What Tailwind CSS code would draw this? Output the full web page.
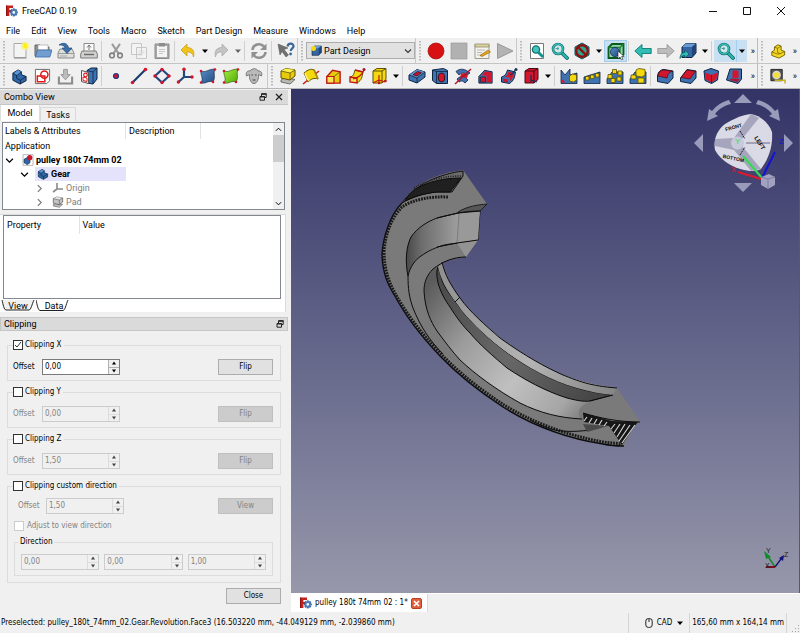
<!DOCTYPE html>
<html lang="en">
<head>
<meta charset="utf-8">
<title>FreeCAD 0.19</title>
<script src="https://cdn.jsdelivr.net/npm/@tailwindcss/browser@4"></script>
</head>
<body class="flex min-h-screen flex-col bg-[#f0f0f0] font-['Roboto','Liberation_Sans',sans-serif] text-[9px] leading-3 text-black">

<!-- shared icon shapes -->
<svg class="absolute size-0" aria-hidden="true">
  <defs>
    <linearGradient id="steel" x1="0" y1="0" x2="1" y2="1"><stop offset="0" stop-color="#5c8fc8"/><stop offset="1" stop-color="#1f4a80"/></linearGradient>
    <linearGradient id="grn" x1="0" y1="0" x2="1" y2="1"><stop offset="0" stop-color="#a5ee3e"/><stop offset="1" stop-color="#4ea806"/></linearGradient>
    <symbol id="logo" viewBox="0 0 12 12"><path d="M0 .5h7v2.600H3.400v2h2.400v2H3.400V11H0z" fill="#c8201c"/><path d="M0 .5h1.200V11H0z" fill="#8d1210"/><g transform="translate(7.8 7.4)"><g fill="#3465a4"><rect x="-1" y="-4" width="2" height="8"/><rect x="-4" y="-1" width="8" height="2"/><rect x="-1" y="-4" width="2" height="8" transform="rotate(45)"/><rect x="-1" y="-4" width="2" height="8" transform="rotate(-45)"/></g><circle r="2.900" fill="#4a7cba"/><circle r="1.300" fill="#fff"/></g></symbol>
    <symbol id="new" viewBox="0 0 18 18"><path d="M3 1.500h12v14H3z" fill="#f4f4f2" stroke="#a9aaa6"/><path d="M3 16h12.500" stroke="#888"/><circle cx="14" cy="4" r="4" fill="#fcf36a" opacity=".8"/><circle cx="14" cy="4" r="2" fill="#fff200"/></symbol>
    <symbol id="open" viewBox="0 0 18 18"><path d="M1 3h5l1 2h8v9H1z" fill="#8d8f8a" stroke="#6b6d69"/><path d="M4 3h10v5H4z" fill="#fff" stroke="#999" stroke-width=".6"/><path d="M3.500 8H18l-2.200 7H1.200z" fill="#729fcf" stroke="#3a6ba8" stroke-width=".8"/></symbol>
    <symbol id="save" viewBox="0 0 18 18"><path d="M3 7h12l2 4v5H1v-5z" fill="#dededc" stroke="#898b87"/><path d="M1.500 11.500h15" stroke="#898b87" stroke-width=".8"/><path d="M3 14h7" stroke="#aaa"/><path d="M2 3c4-3 9-2 9.500 3H15l-5 5.500L5 6h3C8 4 5 2.500 2 3z" fill="#3b6faa" stroke="#234b7d" stroke-width=".7"/></symbol>
    <symbol id="print" viewBox="0 0 18 18"><path d="M4 1.500h10V10H4z" fill="#fafafa" stroke="#8b8b8b"/><path d="M9 3v5M7 5.500 9 3l2 2.500" stroke="#777" fill="none"/><path d="M2 9h14l1.300 3v4H.7v-4z" fill="#d0d0ce" stroke="#7c7c7c"/><path d="M4 12.500h10" stroke="#6c6c6c" stroke-width="1.400"/></symbol>
    <symbol id="cut" viewBox="0 0 18 18"><path d="M4.500 1 12 12M13.500 1 6 12" stroke="#9a9a9a" stroke-width="2.200"/><circle cx="4.500" cy="14" r="2.600" fill="none" stroke="#828282" stroke-width="1.800"/><circle cx="13.500" cy="14" r="2.600" fill="none" stroke="#828282" stroke-width="1.800"/></symbol>
    <symbol id="copy" viewBox="0 0 18 18"><path d="M1.500 1.500h10v11h-10zM6.500 5.500h10v11h-10z" fill="#f3f3f3" stroke="#c6c6c6"/><path d="M8.500 9h6M8.500 11h6M8.500 13h4" stroke="#d5d5d5" stroke-width=".8"/></symbol>
    <symbol id="paste" viewBox="0 0 18 18"><path d="M2 2h14v14.500H2z" fill="#a9a9a9" stroke="#8c8c8c"/><path d="M4 4h10v11H4z" fill="#f4f4f4"/><path d="M6 1h6v3.500H6z" fill="#8d8d8d"/><path d="M6 7.500h6M6 9.500h6M6 11.500h4" stroke="#bbb" stroke-width=".8"/></symbol>
    <symbol id="undo" viewBox="0 0 18 18"><path d="M8 2v3.500c5 0 8 3 6.500 9.500-.8-4-3-5-6.500-5V14L2 8z" fill="#f0c41c" stroke="#c09a10" stroke-width=".7"/></symbol>
    <symbol id="redo" viewBox="0 0 18 18"><path d="M10 2v3.500c-5 0-8 3-6.500 9.500.8-4 3-5 6.500-5V14l6-6z" fill="#c4c4c4" stroke="#a5a5a5" stroke-width=".7"/></symbol>
    <symbol id="refresh" viewBox="0 0 18 18"><path d="M2.500 8c.5-6 8-7.500 11.500-3.500M15.500 10c-.5 6-8 7.500-11.500 3.500" fill="none" stroke="#8f918e" stroke-width="2.600"/><path d="M16.500 1.500V8H10zM1.500 16.500V10H8z" fill="#8f918e"/></symbol>
    <symbol id="whats" viewBox="0 0 18 18"><path d="m1 2 10 4-4 1.500 4.500 5.500-2.500 2-4-5.500L3 13z" fill="#6f716e" stroke="#555" stroke-width=".5"/><path d="M10.500 4.500c.5-4 6.500-3.500 6 0-.3 2-2.800 2-2.800 4.500" fill="none" stroke="#3c6696" stroke-width="2.200"/><circle cx="13.600" cy="12" r="1.400" fill="#3c6696"/></symbol>
    <symbol id="rec" viewBox="0 0 18 18"><circle cx="9" cy="9" r="8" fill="#d81212" stroke="#9c0c0c" stroke-width=".7"/></symbol>
    <symbol id="stop" viewBox="0 0 18 18"><path d="M1 1h16v16H1z" fill="#b1b1b1" stroke="#9a9a9a" stroke-width=".7"/></symbol>
    <symbol id="note" viewBox="0 0 18 18"><path d="M2 2.500h14v14H2z" fill="#f3f2ec" stroke="#9b9b93"/><path d="M2 2h14v3H2z" fill="#d9d3a0" stroke="#87835c" stroke-width=".7"/><path d="M4 8h8M4 10.500h5M4 13h6" stroke="#a8a8a8" stroke-width=".8"/><path d="M7 13.500 15 8l2.500 2-8.500 4.500z" fill="#e4a722" stroke="#8a5c0c" stroke-width=".6"/></symbol>
    <symbol id="play" viewBox="0 0 18 18"><path d="m1.500 1.500 15.500 7.500-15.500 7.500z" fill="#b3b3b3" stroke="#8c8c8c" stroke-width=".8"/></symbol>
    <symbol id="fitall" viewBox="0 0 18 18"><path d="M2.500 1.500h13v15h-13z" fill="#fff" stroke="#777"/><circle cx="8" cy="7.500" r="3.600" fill="#43c4bf" stroke="#0f6f6c" stroke-width="1.300"/><path d="m10.500 10.500 4.500 4.500" stroke="#12908c" stroke-width="2.800"/></symbol>
    <symbol id="mag" viewBox="0 0 18 18"><path d="m10 10 6 6" stroke="#0f6f6c" stroke-width="3.800" stroke-linecap="round"/><path d="m10 10 6 6" stroke="#2db5b0" stroke-width="2" stroke-linecap="round"/><circle cx="7" cy="7" r="5" fill="#cfe9ea" stroke="#0f6f6c" stroke-width="2.600"/><circle cx="7" cy="7" r="5" fill="none" stroke="#37c0ba" stroke-width="1.300"/><path d="M4.500 6.500h3l-1-1.500M7.500 6.500l-1 1.500" stroke="#1f8b88" fill="none" stroke-width=".8"/></symbol>
    <symbol id="nodraw" viewBox="0 0 18 18"><path d="M2 5 9 1l7 4v8l-7 4-7-4z" fill="#29a3a3" stroke="#0a5a5a"/><circle cx="9" cy="9" r="5.800" fill="#4a6" fill-opacity=".3" stroke="#8c1111" stroke-width="2.400"/><path d="m5 5 8 8" stroke="#8c1111" stroke-width="2.400"/></symbol>
    <symbol id="selbox" viewBox="0 0 18 18"><path d="M1.500 5.500 5 2h11.500v10.500L13 16H1.500z" fill="#9bd0b2" stroke="#0a5c1c" stroke-width="1.800"/><path d="M1.500 5.500H13V16M13 5.500 16.500 2" fill="none" stroke="#17862f" stroke-width="1.400"/><circle cx="8" cy="10" r="4.600" fill="url(#steel)" stroke="#12305a" stroke-width=".8"/><path d="M11 9v8l2-2 1.500 3 1.500-.8-1.400-2.600h2.600z" fill="#fff" stroke="#222" stroke-width=".6"/></symbol>
    <symbol id="left" viewBox="0 0 18 18"><path d="M.8 9 8 2.500v4h9.200v5H8v4z" fill="#2fbdb4" stroke="#0f7a73" stroke-width=".9"/></symbol>
    <symbol id="right" viewBox="0 0 18 18"><path d="M17.200 9 10 2.500v4H.8v5H10v4z" fill="#bcbcbc" stroke="#9a9a9a" stroke-width=".9"/></symbol>
    <symbol id="cube" viewBox="0 0 18 18"><path d="M3 5 7 1.500h10v9.500l-4 4.500H3z" fill="#3565a2" stroke="#0e2443"/><path d="M3 5 7 1.500h10L13 5z" fill="#6b9bd0"/><path d="M13 5v10.500l4-4.500V1.500z" fill="#1e4478"/></symbol>
    <symbol id="link" viewBox="0 0 18 18"><use href="#cube"/><path d="M1 16.500c0-4 2-6 5-6V8l4 4-4 4v-2.500c-2 0-4 .8-5 3z" fill="#2fbdb4" stroke="#0a5a5a" stroke-width=".7"/></symbol>
    <symbol id="part" viewBox="0 0 18 18"><path d="m2 10 3-2V4.500L9 2l3.500 1.500V8l4 1.500v4L10 17l-8-3z" fill="#f2d61f" stroke="#6e5d05"/><path d="m5 4.500 3.500 1.500v4.500l3 1.500 5-2.500M8.500 6l4-2.500M2 10l6.500 2.500 3-.5" fill="none" stroke="#6e5d05" stroke-width=".8"/></symbol>
    <symbol id="body" viewBox="0 0 18 18"><path d="M2 5.500 7.500 2 11 4v3l5 2v4.500L9.500 17 2 13z" fill="#2f68a8" stroke="#0b2340"/><path d="M2 5.500 6 8l5-4M6 8v3l4 2 6-4M10 13v4" fill="none" stroke="#0b2340" stroke-width=".9"/><path d="m7.500 2 3 2L6.200 7.300 3 5.500z" fill="#5a94d2"/></symbol>
    <symbol id="sketch" viewBox="0 0 18 18"><path d="M1.500 1.500h15v12l-3 3h-12z" fill="#fff" stroke="#666"/><path d="M3.500 8.500h8v6h-8z" fill="none" stroke="#e01b1b" stroke-width="1.600"/><circle cx="11" cy="7" r="3.800" fill="none" stroke="#e01b1b" stroke-width="1.600"/></symbol>
    <symbol id="import" viewBox="0 0 18 18"><path d="M2 9v7.500h14V9" fill="none" stroke="#8b8b8b" stroke-width="2.200"/><path d="M7 1.500h4V7h3l-5 5.500L4 7h3z" fill="#bdbdbd" stroke="#858585" stroke-width=".8"/></symbol>
    <symbol id="skmap" viewBox="0 0 18 18"><path d="M7 3.500 11 1h6v11l-4 5-6-1z" fill="#3e73b3" stroke="#0e2443"/><path d="M13 5v12M13 5l4-4M7 3.500 13 5" stroke="#0e2443" fill="none" stroke-width=".8"/><path d="m1.500 3.500 7 2v11l-7-2z" fill="#fff" stroke="#555"/><circle cx="5.500" cy="8" r="1.800" fill="none" stroke="#e01b1b" stroke-width="1.200"/><path d="m3 10 4 1v3.500l-4-1z" fill="none" stroke="#e01b1b"/></symbol>
    <symbol id="dot" viewBox="0 0 18 18"><circle cx="9" cy="9" r="2.500" fill="#c31640" stroke="#1f3c7a" stroke-width="1.200"/></symbol>
    <symbol id="line" viewBox="0 0 18 18"><path d="M2.500 15.500 15.500 2.500" stroke="#173c6c" stroke-width="2.200"/><circle cx="2.500" cy="15.500" r="1.800" fill="#d4142c"/><circle cx="15.500" cy="2.500" r="1.800" fill="#d4142c"/></symbol>
    <symbol id="plane" viewBox="0 0 18 18"><path d="M9 2.500 16 9l-7 6.500L2 9z" fill="none" stroke="#22497d" stroke-width="2.200"/><g fill="#d4142c"><circle cx="9" cy="2.500" r="1.700"/><circle cx="16" cy="9" r="1.700"/><circle cx="9" cy="15.500" r="1.700"/><circle cx="2" cy="9" r="1.700"/></g></symbol>
    <symbol id="axes" viewBox="0 0 18 18"><path d="M8 2.500V10h8M8 10l-5.500 5" fill="none" stroke="#22497d" stroke-width="2.200"/><g fill="#d4142c"><circle cx="8" cy="2.300" r="1.700"/><circle cx="16" cy="10" r="1.700"/><circle cx="2.400" cy="15" r="1.700"/></g></symbol>
    <symbol id="blob" viewBox="0 0 18 18"><path d="M2 4c5 2 7-2 14-2-2 5 1 8-2 13-4-2-7 2-12 1 3-5-1-8 0-12z"/></symbol>
    <symbol id="clone" viewBox="0 0 18 18"><path d="M5 4c2-3 7-3 8 0 3-.5 4.500 2 3.500 5l-3-1.500C14 12 12 16.500 9 16.500S4 12 4.500 7.500L1.500 9C.5 6 2 3.500 5 4z" fill="#b9b9b9" stroke="#7b7b7b"/><path d="M6.500 8h1.500M10 8h1.500M7.500 13h3" stroke="#444" stroke-width="1.200"/></symbol>
    <symbol id="pad" viewBox="0 0 18 18"><path d="M2 13 6 10.500l10 2-5 4.500-9-2z" fill="#b9b9b4" stroke="#555" stroke-width=".8"/><path d="m2 4 5-2.500 9 1.500v6l-5 4-9-2z" fill="#e8cb0c" stroke="#5e5004"/><path d="m2 4 5-2.500 9 1.500-5 3z" fill="#fff04a"/><path d="m2 4 9 2v7M11 6l5-3" fill="none" stroke="#5e5004" stroke-width=".8"/></symbol>
    <symbol id="rev" viewBox="0 0 18 18"><path d="M1 17 17 4" stroke="#c11" stroke-width="1.400"/><path d="M2 6c4-3.500 7-4.500 10-3l4 9c-4-1.500-7 0-10 3z" fill="#f5d90f" stroke="#5e5004"/><path d="M12 2.500 16 12" stroke="#a98e08" stroke-width="1.800"/><path d="M3 6c1 4 2 6 4 8" stroke="#fff27a" stroke-width="1.500" fill="none"/></symbol>
    <symbol id="loft" viewBox="0 0 18 18"><path d="M2 9 8 2.500l8 1.500v12H2z" fill="#e8cb0c" stroke="#c11616" stroke-width="1.500"/><path d="M2 9h7.500v7H2z" fill="#f8e454" stroke="#c11616" stroke-width="1.300"/><path d="M9.500 9 16 4" stroke="#5e5004" stroke-width=".8"/></symbol>
    <symbol id="sweep" viewBox="0 0 18 18"><path d="M2 10c4-1 4-4 5-7l8 2c-1 5-1 8-6 11z" fill="#f5d90f" stroke="#5e5004"/><path d="m7 3 8 2" stroke="#c11616" stroke-width="1.400"/><path d="m2 10 7 1v5l-7-1z" fill="#f8e454" stroke="#c11616" stroke-width="1.400"/><path d="M5 12c5-1 9-4 11-9" fill="none" stroke="#c11616" stroke-width="1.200"/><circle cx="16" cy="2.500" r="1.500" fill="#a01030"/></symbol>
    <symbol id="prim" viewBox="0 0 18 18"><path d="m3 4 4-2.500h9v11L12 16H3z" fill="#f5d90f" stroke="#5e5004"/><path d="M3 4h9v12M12 4l4-2.500" fill="none" stroke="#5e5004"/><path d="M9 8v7M9 13l-6 3M9 13l6 2" stroke="#c11616" stroke-width="1.200"/><circle cx="9" cy="16" r="1.300" fill="#c11616"/><circle cx="15.500" cy="14" r="1.300" fill="#c11616"/></symbol>
    <symbol id="pocket" viewBox="0 0 18 18"><path d="m1 8 8-5.500 8 2.500v5l-8 6-8-3z" fill="#3f72b0" stroke="#0e2443"/><path d="m1 8 8-5.500 8 2.500-8 6z" fill="#5f93cf"/><path d="m1 8 8 3 8-6M9 11v5" fill="none" stroke="#0e2443" stroke-width=".8"/><path d="m5 7.700 4.500-3.200 4 1.200L9 9z" fill="#c2142c" stroke="#3a0a12" stroke-width=".7"/></symbol>
    <symbol id="hole" viewBox="0 0 18 18"><path d="m1.500 3 11-1.500 4 2v13h-11l-4-3z" fill="#3f72b0" stroke="#0e2443"/><path d="M5.500 4.500h11M5.500 4.500v12M1.500 3l4 1.500" fill="none" stroke="#0e2443" stroke-width=".8"/><ellipse cx="10.500" cy="10.500" rx="3.200" ry="4.300" fill="#d3162c" stroke="#3a0a12"/></symbol>
    <symbol id="groove" viewBox="0 0 18 18"><path d="M2 4.500C6 1 11 1.500 16 6l-3 2c-3-3-6-2-8 0z" fill="#3f72b0" stroke="#0e2443" stroke-width=".8"/><path d="M3 12c4-4 8-3 11 1l-3 3c-3-3-4-2-6-1z" fill="#3f72b0" stroke="#0e2443" stroke-width=".8"/><path d="M7 7c3-2 6 0 7 2l-2 3C10 9 8 9 6 10z" fill="#d3162c"/><path d="M1 17 17 2" stroke="#b01228" stroke-width="1.400"/></symbol>
    <symbol id="sloft" viewBox="0 0 18 18"><path d="M2 9 8 2.500l8 1.500v12H2z" fill="#3f72b0" stroke="#0e2443"/><path d="m8.500 3.500 6.500 1.300V15H10V8H5z" fill="#d3162c"/><path d="M3.500 9.500H9V15H3.500z" fill="#d3162c" stroke="#17315b"/></symbol>
    <symbol id="ssweep" viewBox="0 0 18 18"><path d="M1.500 10c4-1 5-4 6-7l8 2c-1 5-1 8-6 11.500l-8-1.500z" fill="#3f72b0" stroke="#0e2443"/><path d="M8.500 4.500 14 6c-1 4-1.500 6-4 8v-3.500L4.500 10c2.500-1 3.500-3 4-5.500zM3 11.500l5 .7v3L3 14.500z" fill="#d3162c"/><path d="M10 8c3-1 4-3 6-6" fill="none" stroke="#17315b" stroke-width="1.300"/><circle cx="16" cy="2.500" r="1.500" fill="#17315b"/></symbol>
    <symbol id="sprim" viewBox="0 0 18 18"><path d="m3 4 4-2.500h9v11L12 16H3z" fill="#d3162c" stroke="#4a0812"/><path d="M3 4h9v12M12 4l4-2.500" fill="none" stroke="#4a0812"/><path d="M9 8v7M9 13l6 2" stroke="#17315b" stroke-width="1.300"/></symbol>
    <symbol id="base" viewBox="0 0 18 18"><path d="M1 5 8 3l1 5 8-1v9.500H1z" fill="#3f72b0" stroke="#0e2443" stroke-width=".8"/></symbol>
    <symbol id="mirror" viewBox="0 0 18 18"><path d="M1 16.500V3l4 5 5-6v6l7-2v10.500z" fill="#3f72b0" stroke="#0e2443" stroke-width=".8"/><path d="m9.500 9 3-2 4 1v5l-3 2-4-1z" fill="#f5d90f" stroke="#5e5004" stroke-width=".8"/><path d="m1.500 12 4 3.500H1.500z" fill="#d3162c"/></symbol>
    <symbol id="linpat" viewBox="0 0 18 18"><path d="m1 10 16-5v11.500H1z" fill="#3f72b0" stroke="#0e2443" stroke-width=".8"/><path d="M2.500 9.500h3.500V13H2.500zM7.500 8H11v3.500H7.500zM12.500 6.500H16V10h-3.500z" fill="#f5d90f" stroke="#5e5004" stroke-width=".8"/></symbol>
    <symbol id="polpat" viewBox="0 0 18 18"><path d="m1 12 5-7h11v11.500H1z" fill="#3f72b0" stroke="#0e2443" stroke-width=".8"/><path d="M6.500 2.500h4v4h-4zM12 4h4v4h-4zM2 7.500h4v4H2zM5 11.500h4v4H5zM11 10h4v4h-4z" fill="#f5d90f" stroke="#5e5004" stroke-width=".8"/></symbol>
    <symbol id="multi" viewBox="0 0 18 18"><path d="m1 12 5-7h11v11.500H1z" fill="#3f72b0" stroke="#0e2443" stroke-width=".8"/><path d="m7 3 3-1.500 6 1V8l-3 2-6-1zM2 8h5v4H2zM9 11h6v5H9z" fill="#f5d90f" stroke="#5e5004" stroke-width=".8"/></symbol>
    <symbol id="fillet" viewBox="0 0 18 18"><path d="M1.500 9C2 4.500 5 2.500 8 2.500l9 1.500v7L12 16.500l-10.500-2z" fill="#3f72b0" stroke="#0e2443"/><path d="M2 9c.5-4 3-6 6-6l8.500 1.300C13.500 5 11.500 7 11 11z" fill="#d3162c" stroke="#4a0812" stroke-width=".7"/></symbol>
    <symbol id="chamfer" viewBox="0 0 18 18"><path d="M1.500 11 8 2.500l9 1.500v7L12 16.500l-10.500-2z" fill="#3f72b0" stroke="#0e2443"/><path d="M2 10.500 8 3l8.500 1.300L11 12z" fill="#d3162c" stroke="#4a0812" stroke-width=".7"/></symbol>
    <symbol id="draft" viewBox="0 0 18 18"><path d="m2 4 7-2.500 7.500 2.500-1 9-6 3.500-6.500-3z" fill="#3f72b0" stroke="#0e2443"/><path d="m3 5.500 6.500 2.500L15.500 5.500l-1 6.500-5 3.500L4 12.500z" fill="#d3162c"/><path d="M9.500 8v8" stroke="#17315b"/></symbol>
    <symbol id="thick" viewBox="0 0 18 18"><path d="M5 2h11.500v10L13 16.500 1.500 13z" fill="#3f72b0" stroke="#0e2443"/><path d="M7.500 3.500h6V11h-6z" fill="#d3162c"/><path d="m6.500 11.500 8 .5-2 3-8-2z" fill="#b81226"/></symbol>
    <symbol id="tape" viewBox="0 0 18 18"><path d="M2 1.500h12v12H2z" fill="#55565a" stroke="#222"/><circle cx="8" cy="7.500" r="3.800" fill="#f2dd3a" stroke="#d8d8d8" stroke-width="1.400"/><path d="M6 13h11v3.500" stroke="#c5b020" stroke-width="1.600" fill="none"/></symbol>
    <symbol id="doc" viewBox="0 0 18 18"><path d="M1.500 1h15v16h-15z" fill="#fff" stroke="#999"/><path d="m3 8 5-3 4 3v5l-4 3-5-3z" fill="#2f68a8" stroke="#0b2340" stroke-width=".8"/><circle cx="11.500" cy="5.500" r="4" fill="#c8182a"/></symbol>
    <symbol id="chev" viewBox="0 0 8 8"><path d="m1 2.500 3 3 3-3" fill="none" stroke="currentColor" stroke-width="1.100"/></symbol>
    <symbol id="dd" viewBox="0 0 8 8"><path d="M1 2.500h6L4 6z" fill="currentColor"/></symbol>
    <symbol id="float" viewBox="0 0 8 8"><path d="M2.500.8h4.700v3.700H6M2.500.8V3" fill="none" stroke="#222"/><path d="M1 3.500h4.500v3.700H1z" fill="none" stroke="#222"/><path d="M2.500 1h5M1 3.700h4.500" stroke="#222" stroke-width="1.400"/></symbol>
    <symbol id="spin" viewBox="0 0 8 6"><path d="M4 1.500 6 4.500H2z" fill="currentColor"/></symbol>
    <symbol id="handle" viewBox="0 0 4 20"><path d="M2 0v20" stroke="#a8a8a8" stroke-width="1.500" stroke-dasharray="1.500 1.500"/></symbol>
  </defs>
</svg>

<header class="bg-white">
  <div class="flex h-[21px] items-center pr-[2px] pl-[6px]">
    <svg class="mr-1 size-3"><use href="#logo"/></svg>
    <h1 class="flex-1">FreeCAD 0.19</h1>
    <button aria-label="Minimize" class="flex h-full w-[34px] items-center justify-center"><svg class="size-2" viewBox="0 0 8 8"><path d="M0 4.500h8" stroke="#111"/></svg></button>
    <button aria-label="Maximize" class="flex h-full w-[34px] items-center justify-center"><svg class="size-2" viewBox="0 0 8 8"><path d="M.5.5h7v7h-7z" fill="none" stroke="#111"/></svg></button>
    <button aria-label="Close window" class="flex h-full w-[34px] items-center justify-center"><svg class="size-2" viewBox="0 0 8 8"><path d="m0 0 8 8M8 0 0 8" stroke="#111"/></svg></button>
  </div>
  <nav class="flex h-[17px] gap-[11px] px-[6px] pt-[3px]">
    <button class="leading-3">File</button><button class="leading-3">Edit</button><button class="leading-3">View</button><button class="leading-3">Tools</button><button class="leading-3">Macro</button><button class="leading-3">Sketch</button><button class="leading-3">Part Design</button><button class="leading-3">Measure</button><button class="leading-3">Windows</button><button class="leading-3">Help</button>
  </nav>
</header>

<div class="flex h-[26px] items-center border-b border-[#c4c4c4]">
  <div class="flex h-full min-w-0 flex-1 items-center overflow-hidden border-r border-[#bdbdbd]">
    <div class="flex h-full items-center border-r border-[#c8c8c8]">
      <svg class="h-5 w-2"><use href="#handle"/></svg>
      <button aria-label="New" class="flex w-[23px] justify-center"><svg class="size-[18px]"><use href="#new"/></svg></button>
      <button aria-label="Open" class="flex w-[23px] justify-center"><svg class="size-[18px]"><use href="#open"/></svg></button>
      <button aria-label="Save" class="flex w-[23px] justify-center"><svg class="size-[18px]"><use href="#save"/></svg></button>
      <button aria-label="Print" class="flex w-[23px] justify-center"><svg class="size-[18px]"><use href="#print"/></svg></button>
      <span class="mr-[2px] ml-px h-5 w-px bg-[#cfcfcf]"></span>
      <button aria-label="Cut" class="flex w-[23px] justify-center"><svg class="size-[16px]"><use href="#cut"/></svg></button>
      <button aria-label="Copy" class="flex w-[23px] justify-center"><svg class="size-[18px]"><use href="#copy"/></svg></button>
      <button aria-label="Paste" class="flex w-[23px] justify-center"><svg class="size-[18px]"><use href="#paste"/></svg></button>
      <span class="mr-[2px] ml-px h-5 w-px bg-[#cfcfcf]"></span>
      <button aria-label="Undo" class="flex w-[33px] items-center pl-[2px]"><svg class="size-[18px]"><use href="#undo"/></svg><svg class="ml-[4px] size-2"><use href="#dd"/></svg></button>
      <button aria-label="Redo" class="flex w-[33px] items-center pl-[2px] text-[#666]"><svg class="size-[18px]"><use href="#redo"/></svg><svg class="ml-[4px] size-2"><use href="#dd"/></svg></button>
      <span class="mr-[2px] ml-px h-5 w-px bg-[#cfcfcf]"></span>
      <button aria-label="Refresh" class="flex w-[23px] justify-center"><svg class="size-[18px]"><use href="#refresh"/></svg></button>
      <span class="mr-[2px] ml-px h-5 w-px bg-[#cfcfcf]"></span>
      <button aria-label="What's this?" class="flex w-[23px] justify-center"><svg class="size-[18px]"><use href="#whats"/></svg></button>
    </div>
    <div class="flex h-full items-center border-r border-[#c8c8c8]">
      <svg class="h-5 w-2"><use href="#handle"/></svg>
      <label class="relative flex items-center">
        <svg class="pointer-events-none absolute left-1 size-3"><use href="#cube"/><circle cx="3.500" cy="3.500" r="2.500" fill="#f5d90f"/></svg>
        <select aria-label="Workbench" class="h-[17px] w-[109px] appearance-none border border-[#adadad] bg-[#e1e1e1] pl-[17px] text-[9px] leading-3"><option>Part Design</option></select>
        <svg class="pointer-events-none absolute right-[3px] size-2 text-[#333]"><use href="#chev"/></svg>
      </label>
    </div>
    <div class="flex h-full items-center border-r border-[#c8c8c8]">
      <svg class="h-5 w-2"><use href="#handle"/></svg>
      <button aria-label="Record macro" class="flex w-[23px] justify-center"><svg class="size-[18px]"><use href="#rec"/></svg></button>
      <button aria-label="Stop macro" class="flex w-[23px] justify-center"><svg class="size-[18px]"><use href="#stop"/></svg></button>
      <button aria-label="Macros" class="flex w-[23px] justify-center"><svg class="size-[18px]"><use href="#note"/></svg></button>
      <button aria-label="Run macro" class="flex w-[23px] justify-center"><svg class="size-[18px]"><use href="#play"/></svg></button>
    </div>
    <svg class="h-5 w-2 shrink-0"><use href="#handle"/></svg>
    <button aria-label="Fit all" class="flex w-[23px] justify-center"><svg class="size-[18px]"><use href="#fitall"/></svg></button>
    <button aria-label="Fit selection" class="flex w-[23px] justify-center"><svg class="size-[18px]"><use href="#mag"/></svg></button>
    <button aria-label="Draw style" class="flex w-[33px] items-center pl-[2px]"><svg class="size-[18px]"><use href="#nodraw"/></svg><svg class="ml-[4px] size-2"><use href="#dd"/></svg></button>
    <button aria-label="Bounding box" class="flex h-[22px] w-[23px] items-center justify-center border border-[#a5cdec] bg-[#c9e0f3]"><svg class="size-[18px]"><use href="#selbox"/></svg></button>
    <span class="mr-[2px] ml-px h-5 w-px bg-[#cfcfcf]"></span>
    <button aria-label="Back" class="flex w-[23px] justify-center"><svg class="size-[18px]"><use href="#left"/></svg></button>
    <button aria-label="Forward" class="flex w-[23px] justify-center"><svg class="size-[18px]"><use href="#right"/></svg></button>
    <button aria-label="Link navigation" class="flex w-[33px] items-center pl-[2px]"><svg class="size-[18px]"><use href="#link"/></svg><svg class="ml-[4px] size-2"><use href="#dd"/></svg></button>
    <span class="mr-[2px] ml-px h-5 w-px bg-[#cfcfcf]"></span>
    <button aria-label="Sync view" class="flex h-[22px] w-[33px] items-center bg-[#c9e0f3] pl-[3px]"><svg class="size-[18px]"><use href="#mag"/></svg><span class="ml-px flex h-full items-center border-l border-[#a5cdec] pl-px"><svg class="size-2"><use href="#dd"/></svg></span></button>
    <button aria-label="More view tools" class="ml-auto px-[2px]">»</button>
  </div>
  <div class="flex w-[42px] items-center">
    <svg class="h-5 w-2"><use href="#handle"/></svg>
    <button aria-label="Create part" class="flex w-[23px] justify-center"><svg class="size-[16px]"><use href="#part"/></svg></button>
    <button aria-label="More structure tools" class="ml-auto px-[3px]">»</button>
  </div>
</div>

<div class="flex h-[25px] items-center border-b border-[#b5b5b5]">
  <div class="flex h-full min-w-0 flex-1 items-center overflow-hidden border-r border-[#bdbdbd]">
    <div class="flex h-full items-center border-r border-[#c8c8c8] pr-[2px]">
      <svg class="h-5 w-2"><use href="#handle"/></svg>
      <button aria-label="Body" class="flex w-[23px] justify-center"><svg class="size-[17px]"><use href="#body"/></svg></button>
      <button aria-label="Sketch" class="flex w-[23px] justify-center"><svg class="size-[17px]"><use href="#sketch"/></svg></button>
      <button aria-label="Edit sketch" class="flex w-[23px] justify-center"><svg class="size-[17px]"><use href="#import"/></svg></button>
      <button aria-label="Map sketch" class="flex w-[23px] justify-center"><svg class="size-[18px]"><use href="#skmap"/></svg></button>
      <span class="mr-[2px] ml-px h-5 w-px bg-[#cfcfcf]"></span>
      <button aria-label="Point" class="flex w-[23px] justify-center"><svg class="size-[18px]"><use href="#dot"/></svg></button>
      <button aria-label="Line" class="flex w-[23px] justify-center"><svg class="size-[18px]"><use href="#line"/></svg></button>
      <button aria-label="Plane" class="flex w-[23px] justify-center"><svg class="size-[18px]"><use href="#plane"/></svg></button>
      <button aria-label="Coordinate system" class="flex w-[23px] justify-center"><svg class="size-[18px]"><use href="#axes"/></svg></button>
      <button aria-label="Shape binder" class="flex w-[23px] justify-center"><svg class="size-[18px]" viewBox="0 0 18 18" fill="url(#steel)" stroke="#0e2443" stroke-width=".6"><use href="#blob"/><g fill="#d4142c" stroke="none"><circle cx="2" cy="4" r="1.300"/><circle cx="16" cy="2.500" r="1.300"/><circle cx="2" cy="15.500" r="1.300"/><circle cx="14" cy="15" r="1.300"/></g></svg></button>
      <button aria-label="Sub-shape binder" class="flex w-[23px] justify-center"><svg class="size-[18px]" viewBox="0 0 18 18" fill="url(#grn)" stroke="#1d4a05" stroke-width=".6"><use href="#blob"/><g fill="#d4142c" stroke="none"><circle cx="2" cy="4" r="1.300"/><circle cx="16" cy="2.500" r="1.300"/><circle cx="2" cy="15.500" r="1.300"/><circle cx="14" cy="15" r="1.300"/></g></svg></button>
      <button aria-label="Clone" class="flex w-[23px] justify-center"><svg class="size-[18px]"><use href="#clone"/></svg></button>
    </div>
    <svg class="h-5 w-2 shrink-0"><use href="#handle"/></svg>
    <button aria-label="Pad" class="flex w-[23px] justify-center"><svg class="size-[18px]"><use href="#pad"/></svg></button>
    <button aria-label="Revolution" class="flex w-[23px] justify-center"><svg class="size-[18px]"><use href="#rev"/></svg></button>
    <button aria-label="Loft" class="flex w-[23px] justify-center"><svg class="size-[17px]"><use href="#loft"/></svg></button>
    <button aria-label="Pipe" class="flex w-[23px] justify-center"><svg class="size-[18px]"><use href="#sweep"/></svg></button>
    <button aria-label="Additive primitive" class="flex w-[33px] items-center pl-[2px]"><svg class="size-[18px]"><use href="#prim"/></svg><svg class="ml-[4px] size-2"><use href="#dd"/></svg></button>
    <span class="mr-[2px] ml-px h-5 w-px bg-[#cfcfcf]"></span>
    <button aria-label="Pocket" class="flex w-[23px] justify-center"><svg class="size-[18px]"><use href="#pocket"/></svg></button>
    <button aria-label="Hole" class="flex w-[23px] justify-center"><svg class="size-[18px]"><use href="#hole"/></svg></button>
    <button aria-label="Groove" class="flex w-[23px] justify-center"><svg class="size-[18px]"><use href="#groove"/></svg></button>
    <button aria-label="Subtractive loft" class="flex w-[23px] justify-center"><svg class="size-[17px]"><use href="#sloft"/></svg></button>
    <button aria-label="Subtractive pipe" class="flex w-[23px] justify-center"><svg class="size-[18px]"><use href="#ssweep"/></svg></button>
    <button aria-label="Subtractive primitive" class="flex w-[33px] items-center pl-[2px]"><svg class="size-[18px]"><use href="#sprim"/></svg><svg class="ml-[4px] size-2"><use href="#dd"/></svg></button>
    <span class="mr-[2px] ml-px h-5 w-px bg-[#cfcfcf]"></span>
    <button aria-label="Mirrored" class="flex w-[23px] justify-center"><svg class="size-[18px]"><use href="#mirror"/></svg></button>
    <button aria-label="Linear pattern" class="flex w-[23px] justify-center"><svg class="size-[18px]"><use href="#linpat"/></svg></button>
    <button aria-label="Polar pattern" class="flex w-[23px] justify-center"><svg class="size-[18px]"><use href="#polpat"/></svg></button>
    <button aria-label="MultiTransform" class="flex w-[23px] justify-center"><svg class="size-[18px]"><use href="#multi"/></svg></button>
    <span class="mr-[2px] ml-px h-5 w-px bg-[#cfcfcf]"></span>
    <button aria-label="Fillet" class="flex w-[23px] justify-center"><svg class="size-[18px]"><use href="#fillet"/></svg></button>
    <button aria-label="Chamfer" class="flex w-[23px] justify-center"><svg class="size-[18px]"><use href="#chamfer"/></svg></button>
    <button aria-label="Draft" class="flex w-[23px] justify-center"><svg class="size-[18px]"><use href="#draft"/></svg></button>
    <button aria-label="Thickness" class="flex w-[23px] justify-center"><svg class="size-[18px]"><use href="#thick"/></svg></button>
    <button aria-label="More part design tools" class="ml-auto px-[2px]">»</button>
  </div>
  <div class="flex w-[42px] items-center">
    <svg class="h-5 w-2"><use href="#handle"/></svg>
    <button aria-label="Measure distance" class="flex w-[23px] justify-center"><svg class="size-[17px]"><use href="#tape"/></svg></button>
    <button aria-label="More measure tools" class="ml-auto px-[3px]">»</button>
  </div>
</div>

<main class="flex flex-1">
  <aside class="flex w-[288px] shrink-0 flex-col">
    <section aria-label="Combo View" class="bg-[#f0f0f0]">
      <div class="mt-px flex h-[15px] items-center border-b border-[#c6c6c6] bg-[#dadada] px-1">
        <h2 class="flex-1">Combo View</h2>
        <button aria-label="Float panel" class="mr-2"><svg class="size-2"><use href="#float"/></svg></button>
        <button aria-label="Close panel" class="mr-px"><svg class="size-2" viewBox="0 0 8 8"><path d="m1 1 6 6M7 1 1 7" stroke="#222" stroke-width="1.300"/></svg></button>
      </div>
      <div role="tablist" class="flex h-4 items-end">
        <button role="tab" class="h-4 w-10 border-x border-[#dedede] bg-white leading-3">Model</button>
        <button role="tab" class="h-[14px] w-9 border border-b-0 border-[#d9d9d9] leading-3">Tasks</button>
      </div>
      <div class="mt-px mr-[3px] ml-[2px] flex h-[88px] overflow-hidden border border-[#828790] bg-white">
        <div class="min-w-0 flex-1 overflow-hidden">
          <div class="flex h-4 items-center">
            <div class="w-[123px] border-r border-[#e2e2e2] pl-[2px] leading-4">Labels &amp; Attributes</div>
            <div class="w-[75px] border-r border-[#e2e2e2] pl-[3px] leading-4">Description</div>
          </div>
          <ul role="tree" class="leading-[14px]">
            <li role="treeitem" class="pl-[2px]">Application</li>
            <li role="treeitem" class="flex items-center pl-[2px] font-bold"><svg class="mr-2 size-[9px]"><use href="#chev"/></svg><svg class="mr-[2px] size-3"><use href="#doc"/></svg>pulley 180t 74mm 02</li>
            <li role="treeitem" class="flex items-center pl-[17px] font-bold"><svg class="mr-[6px] size-[9px] shrink-0"><use href="#chev"/></svg><span class="flex w-[91px] items-center bg-[#e5e3fb] pl-[2px]"><svg class="mr-[2px] size-3"><use href="#body"/></svg>Gear</span></li>
            <li role="treeitem" class="flex items-center pl-[32px] text-[#7d7d7d]"><svg class="mr-2 size-[9px] -rotate-90"><use href="#chev"/></svg><svg class="mr-[2px] size-3" viewBox="0 0 12 12"><path d="M5 1v6h6M5 7l-4 3" fill="none" stroke="#8a8a8a" stroke-width="1.600"/></svg>Origin</li>
            <li role="treeitem" class="flex items-center pl-[32px] text-[#7d7d7d]"><svg class="mr-2 size-[9px] -rotate-90"><use href="#chev"/></svg><svg class="mr-[2px] size-3 grayscale"><use href="#pad"/></svg>Pad</li>
          </ul>
        </div>
        <div class="flex w-[11px] flex-col items-center bg-[#f0f0f0]">
          <button aria-label="Scroll up" class="flex h-3 items-center"><svg class="size-[7px] rotate-180"><use href="#chev"/></svg></button>
          <div class="h-[27px] w-full bg-[#cdcdcd]"></div>
          <button aria-label="Scroll down" class="mt-auto flex h-3 items-center"><svg class="size-[7px]"><use href="#chev"/></svg></button>
        </div>
      </div>
      <div class="mt-1 mr-[2px] border-t border-r border-[#dcdcdc] bg-white">
        <div class="mr-1 ml-[3px] h-[84px] border border-[#828790] bg-white">
          <table class="w-full text-left"><thead><tr><th class="w-[75px] border-r border-[#e2e2e2] py-[3px] pl-[3px] font-normal">Property</th><th class="py-[3px] pl-[3px] font-normal">Value</th></tr></thead></table>
        </div>
        <div role="tablist" class="mt-px flex h-3">
          <button role="tab" class="relative w-9 leading-3"><svg class="absolute inset-0 h-3 w-9" viewBox="0 0 36 12"><path d="M2 0c1 4 2 10 4 10h23c2 0 3-6 5-10z" fill="#f0f0f0"/><path d="M2 0c1 4 2 10 4 10h23c2 0 3-6 5-10" fill="none" stroke="#222"/></svg><span class="relative">View</span></button>
          <button role="tab" class="relative w-9 leading-3"><svg class="absolute inset-0 h-3 w-9" viewBox="0 0 36 12"><path d="M0 0c1 4 2 10.500 4 10.500h23c2 0 3-6 5-10.500" fill="#fff" stroke="#222"/></svg><span class="relative">Data</span></button>
        </div>
      </div>
    </section>

    <section aria-label="Clipping" class="mt-[5px] font-['DejaVu_Sans_Condensed','DejaVu_Sans',sans-serif] text-[8px] leading-3">
      <div class="flex h-[14px] items-center border border-[#c6c6c6] bg-[#dadada] px-[3px] font-['Roboto','Liberation_Sans',sans-serif] text-[9px]">
        <h2 class="flex-1">Clipping</h2>
        <button aria-label="Float panel"><svg class="size-2"><use href="#float"/></svg></button>
      </div>
      <form class="flex flex-col gap-[5px] pt-[8px] pr-[7px] pl-[7px]">
        <fieldset class="border border-[#dcdcdc] pr-[7px] pb-[5px] pl-[5px]">
          <legend class="pr-[2px]"><label class="flex items-center gap-[2px]"><span class="relative flex"><input type="checkbox" checked class="peer size-[10px] appearance-none border border-[#333] bg-white"><svg class="pointer-events-none absolute inset-px hidden size-2 peer-checked:block" viewBox="0 0 8 8"><path d="m1 4 2 2 4-5" fill="none" stroke="#333"/></svg></span>Clipping X</label></legend>
          <div class="flex items-center pt-2"><label for="ox" class="w-[29px]">Offset</label>
            <div class="flex h-4 w-[78px] border border-[#7a7a7a] bg-white"><input id="ox" value="0,00" class="w-0 flex-1 bg-transparent pl-[2px] outline-none"><span class="flex w-[11px] flex-col border-l border-[#b0b0b0] bg-[#f0f0f0]"><button type="button" aria-label="Increase" class="flex flex-1 items-center border-b border-[#b0b0b0]"><svg class="h-[6px] w-[10px]"><use href="#spin"/></svg></button><button type="button" aria-label="Decrease" class="flex flex-1 items-center"><svg class="h-[6px] w-[10px] rotate-180"><use href="#spin"/></svg></button></span></div>
            <button type="button" class="ml-auto h-4 w-[55px] border border-[#adadad] bg-[#e1e1e1] leading-3">Flip</button></div>
        </fieldset>
        <fieldset class="border border-[#dcdcdc] pr-[7px] pb-[5px] pl-[5px]">
          <legend class="pr-[2px]"><label class="flex items-center gap-[2px]"><input type="checkbox" class="size-[10px] appearance-none border border-[#333] bg-white">Clipping Y</label></legend>
          <div class="flex items-center pt-2 text-[#838383]"><label for="oy" class="w-[29px]">Offset</label>
            <div class="flex h-4 w-[78px] border border-[#cccccc]"><input id="oy" value="0,00" disabled class="w-0 flex-1 bg-transparent pl-[2px]"><span class="flex w-[11px] flex-col border-l border-[#dcdcdc] text-[#444]"><button type="button" disabled aria-label="Increase" class="flex flex-1 items-center border-b border-[#dcdcdc]"><svg class="h-[6px] w-[10px]"><use href="#spin"/></svg></button><button type="button" disabled aria-label="Decrease" class="flex flex-1 items-center"><svg class="h-[6px] w-[10px] rotate-180"><use href="#spin"/></svg></button></span></div>
            <button type="button" disabled class="ml-auto h-4 w-[55px] border border-[#bfbfbf] bg-[#cccccc] leading-3">Flip</button></div>
        </fieldset>
        <fieldset class="border border-[#dcdcdc] pr-[7px] pb-[5px] pl-[5px]">
          <legend class="pr-[2px]"><label class="flex items-center gap-[2px]"><input type="checkbox" class="size-[10px] appearance-none border border-[#333] bg-white">Clipping Z</label></legend>
          <div class="flex items-center pt-2 text-[#838383]"><label for="oz" class="w-[29px]">Offset</label>
            <div class="flex h-4 w-[78px] border border-[#cccccc]"><input id="oz" value="1,50" disabled class="w-0 flex-1 bg-transparent pl-[2px]"><span class="flex w-[11px] flex-col border-l border-[#dcdcdc] text-[#444]"><button type="button" disabled aria-label="Increase" class="flex flex-1 items-center border-b border-[#dcdcdc]"><svg class="h-[6px] w-[10px]"><use href="#spin"/></svg></button><button type="button" disabled aria-label="Decrease" class="flex flex-1 items-center"><svg class="h-[6px] w-[10px] rotate-180"><use href="#spin"/></svg></button></span></div>
            <button type="button" disabled class="ml-auto h-4 w-[55px] border border-[#bfbfbf] bg-[#cccccc] leading-3">Flip</button></div>
        </fieldset>
        <fieldset class="border border-[#dcdcdc] pr-[7px] pb-[6px] pl-[5px]">
          <legend class="pr-[2px]"><label class="flex items-center gap-[2px]"><input type="checkbox" class="size-[10px] appearance-none border border-[#333] bg-white">Clipping custom direction</label></legend>
          <div class="flex items-center pt-[6px] pl-[5px] text-[#838383]"><label for="oc" class="w-[28px]">Offset</label>
            <div class="flex h-4 w-[78px] border border-[#cccccc]"><input id="oc" value="1,50" disabled class="w-0 flex-1 bg-transparent pl-[2px]"><span class="flex w-[11px] flex-col border-l border-[#dcdcdc] text-[#444]"><button type="button" disabled aria-label="Increase" class="flex flex-1 items-center border-b border-[#dcdcdc]"><svg class="h-[6px] w-[10px]"><use href="#spin"/></svg></button><button type="button" disabled aria-label="Decrease" class="flex flex-1 items-center"><svg class="h-[6px] w-[10px] rotate-180"><use href="#spin"/></svg></button></span></div>
            <button type="button" disabled class="ml-auto h-4 w-[55px] border border-[#bfbfbf] bg-[#cccccc] leading-3">View</button></div>
          <label class="mt-[6px] flex items-center gap-[3px] pl-px text-[#838383]"><input type="checkbox" disabled class="size-[10px] appearance-none border border-[#cccccc] bg-white">Adjust to view direction</label>
          <fieldset class="mt-1 ml-px border border-[#dcdcdc] px-[6px] pb-[5px]">
            <legend class="ml-[-2px] px-px">Direction</legend>
            <div class="flex gap-[5px] pt-[6px] text-[#838383]">
              <div class="flex h-4 flex-1 border border-[#cccccc]"><input aria-label="Direction X" value="0,00" disabled class="w-0 flex-1 bg-transparent pl-[2px]"><span class="flex w-[11px] flex-col border-l border-[#dcdcdc] text-[#444]"><button type="button" disabled aria-label="Increase" class="flex flex-1 items-center border-b border-[#dcdcdc]"><svg class="h-[6px] w-[10px]"><use href="#spin"/></svg></button><button type="button" disabled aria-label="Decrease" class="flex flex-1 items-center"><svg class="h-[6px] w-[10px] rotate-180"><use href="#spin"/></svg></button></span></div>
              <div class="flex h-4 flex-1 border border-[#cccccc]"><input aria-label="Direction Y" value="0,00" disabled class="w-0 flex-1 bg-transparent pl-[2px]"><span class="flex w-[11px] flex-col border-l border-[#dcdcdc] text-[#444]"><button type="button" disabled aria-label="Increase" class="flex flex-1 items-center border-b border-[#dcdcdc]"><svg class="h-[6px] w-[10px]"><use href="#spin"/></svg></button><button type="button" disabled aria-label="Decrease" class="flex flex-1 items-center"><svg class="h-[6px] w-[10px] rotate-180"><use href="#spin"/></svg></button></span></div>
              <div class="flex h-4 flex-1 border border-[#cccccc]"><input aria-label="Direction Z" value="1,00" disabled class="w-0 flex-1 bg-transparent pl-[2px]"><span class="flex w-[11px] flex-col border-l border-[#dcdcdc] text-[#444]"><button type="button" disabled aria-label="Increase" class="flex flex-1 items-center border-b border-[#dcdcdc]"><svg class="h-[6px] w-[10px]"><use href="#spin"/></svg></button><button type="button" disabled aria-label="Decrease" class="flex flex-1 items-center"><svg class="h-[6px] w-[10px] rotate-180"><use href="#spin"/></svg></button></span></div>
            </div>
          </fieldset>
        </fieldset>
        <button type="button" class="h-4 w-[55px] self-end border border-[#adadad] bg-[#e1e1e1] leading-3">Close</button>
      </form>
    </section>
  </aside>

  <section aria-label="3D view" class="ml-[3px] flex min-w-0 flex-1 flex-col">
    <div class="relative flex-1 border-r border-[#555a6a] bg-linear-to-b from-[#333366] to-[#9898ab]">
      <svg class="absolute inset-0 size-full" viewBox="291 89 508 504" preserveAspectRatio="xMidYMid slice" role="img" aria-label="Clipped pulley model">
        <defs>
          <linearGradient id="g1" x1="425" y1="290" x2="590" y2="420" gradientUnits="userSpaceOnUse"><stop offset="0" stop-color="#5c5c5c"/><stop offset=".3" stop-color="#9c9c9c"/><stop offset=".6" stop-color="#c0c0c0"/><stop offset=".85" stop-color="#a6a6a6"/><stop offset="1" stop-color="#747474"/></linearGradient>
          <linearGradient id="g2" x1="406" y1="0" x2="460" y2="0" gradientUnits="userSpaceOnUse"><stop offset="0" stop-color="#484848"/><stop offset=".3" stop-color="#6e6e6e"/><stop offset="1" stop-color="#a0a0a0"/></linearGradient>
          <linearGradient id="g3" x1="440" y1="270" x2="610" y2="395" gradientUnits="userSpaceOnUse"><stop offset="0" stop-color="#484848"/><stop offset=".5" stop-color="#686868"/><stop offset="1" stop-color="#424242"/></linearGradient>
          <linearGradient id="g4" x1="440" y1="265" x2="617" y2="390" gradientUnits="userSpaceOnUse"><stop offset="0" stop-color="#8f8f8f"/><stop offset=".6" stop-color="#b4b4b4"/><stop offset="1" stop-color="#858585"/></linearGradient>
        </defs>
        <path d="M463 170C440 173 415 182 402 203C390 215 383 237 382 255C383 275 388 285 395 296C405 315 420 335 440 356C458 375 480 392 503 407C530 424 565 438 603 444C612 446 619 446 624 446L635 424L640 422C633 411 625 400 617 388C590 384 578 381 563 375C545 367 525 356 500 338C485 325 470 312 460 298C450 285 445 272 443 262C450 259 458 257 466 257L478 240L480 211L487 204Z" fill="#7a7a7a"/>
        <path d="M402 203C390 215 383 237 382 255C383 275 388 285 395 296C405 315 420 335 440 356C458 375 480 392 503 407C530 424 565 438 603 444C612 446 619 446 624 446" fill="none" stroke="#0c0c0c" stroke-width="1.400"/>
        <path d="M463 171C440 174 415 184 402 203C412 197 425 193 437 192L452 192L463 176Z" fill="#6c6c6c" stroke="#0c0c0c"/>
        <path d="M461 178C445 178 428 181 414 190C410 193 407 197 405 201C417 195 428 193 437 192L450 192Z" fill="#202020" stroke="#0c0c0c"/>
        <path d="M461 176C446 176 427 179 413 189" fill="none" stroke="#222" stroke-width="1.600" stroke-dasharray="1.200 1.200"/>
        <path d="M448 197C430 196 412 200 402 207C392 217 386 232 384 250C384 270 389 283 396 295C406 313 421 333 440 353C459 373 481 390 504 405C530 421 565 435 603 442L622 444" fill="none" stroke="#1a1a1a" stroke-width="3" stroke-dasharray="1.800 1"/>
        <path d="M480 211C470 211 464 212 458 213C450 215 444 216 437 218C427 222 418 227 411 237C406 247 405 262 408 276C410 267 415 260 421 256C428 251 433 249 438 247C445 244 452 244 458 243C466 241 472 240 478 240Z" fill="url(#g2)" stroke="#0c0c0c"/>
        <path d="M459 213 480 211 478 240 457 243Z" fill="#999"/>
        <path d="M459 214 457 243" stroke="#7c7c7c" fill="none"/>
        <path d="M457 243 478 240 466 257Z" fill="#939393"/>
        <path d="M458 212C468 206 477 205 487 204L480 211C470 211 464 212 458 213Z" fill="#565656" stroke="#0c0c0c" stroke-width=".8"/>
        <path d="M437 218 458 213 480 211M437 247 457 243 478 240" stroke="#0c0c0c" fill="none"/>
        <path d="M466 257C453 257 442 262 433 269C427 275 424 282 424 291C425 310 431 322 437 331C445 342 452 351 460 360C475 374 495 389 520 403C540 413 560 418 582 419L590 401C600 400 607 398 613 395L617 388C590 384 578 381 563 375C545 367 525 356 500 338C485 325 470 312 460 298C450 285 445 272 443 262Z" fill="url(#g1)"/>
        <path d="M438 267C436 272 437 278 438 283C441 293 445 300 450 307C457 318 462 325 470 333C480 345 493 356 507 368C525 380 545 391 567 398C575 400 583 402 590 401L613 395C590 393 562 385 540 373C515 360 497 346 480 330C470 320 463 313 458 305C452 297 447 291 443 283Z" fill="url(#g3)" stroke="#0c0c0c"/>
        <path d="M442 262C445 275 450 284 460 298C470 312 485 325 500 338C525 356 545 367 563 375C578 381 590 384 617 388L613 395C590 393 562 385 540 373C515 360 497 346 480 330C470 320 463 313 458 305C447 291 441 280 438 267Z" fill="url(#g4)"/>
        <path d="M442 262C445 275 450 284 460 298C470 312 485 325 500 338C525 356 545 367 563 375C578 381 590 386 617 388M455 302 460 297" fill="none" stroke="#0c0c0c"/>
        <path d="M617 388 640 422 600 421 582 419C575 412 580 405 592 401L613 395Z" fill="#7a7a7a"/>
        <path d="M590 401 613 395" stroke="#0c0c0c"/>
        <path d="M466 257C453 257 442 262 433 269C427 275 424 282 424 291C425 310 431 322 437 331C445 342 452 351 460 360C475 374 495 389 520 403C540 413 560 418 582 419" fill="none" stroke="#0c0c0c"/>
        <path d="M408 276C408 288 409 297 413 308C420 326 430 341 443 354M530 420C542 426 550 430 562 431C573 432 582 431 590 430" fill="none" stroke="#0c0c0c"/>
        <path d="M583 413 612 421 638 422 634 427 622 445 609 426 584 422Z" fill="#161616"/>
        <path d="M583 424 608 426 587 432Z" fill="#4a4a4a"/>
        <path d="M587 417 584 421M592 418 589 423M597 419 594 424M602 420 599 425M607 422 604 426M615 424 611 429M620 424 614 433M625 424 617 437M630 425 619 441M635 425 622 443" stroke="#d0d0d0" stroke-width="1.200"/>
        <path d="M583 413C600 418 618 422 640 422" fill="none" stroke="#0c0c0c"/>
      </svg>
      <svg class="absolute top-px right-0 size-[110px]" viewBox="0 0 110 110" role="img" aria-label="Navigation cube">
        <g fill="#9a9abb">
          <path d="m54 4 9 9H45zM54 102l9-9H45zM5 53l9-9v18zM104 53l-9-9v18z"/>
          <path d="M40 10 42 14C34 16 29 20 26 24L29 26 18 31 20 19 23 21C28 15 33 12 40 10zM69 10 67 14C75 16 80 20 83 24L80 26 91 31 89 19 86 21C81 15 76 12 69 10z"/>
        </g>
        <path d="M62 24C72 26 80 33 83 42C84 56 80 68 72 79C67 82 60 81 55 80C43 77 32 71 26 60C24 50 28 40 36 34C44 29 53 25 62 24z" fill="#dadae6"/>
        <path d="M62 24 70 28 53 49 54 57 72 79 62 81 45 60 26 56V49L45 48z" fill="#a5a5bd"/>
        <circle cx="48.500" cy="53" r="6.500" fill="#c9c9dc"/>
        <path d="m51 41 5 8M51 65l5-8" stroke="#14142a" stroke-dasharray="2 1"/><path d="M57 53h24" stroke="#6a6a86"/>
        <g font-family="Liberation Sans" font-weight="bold" fill="#0a0a0a" text-anchor="middle">
          <text transform="translate(69 54) rotate(58)" font-size="6">LEFT</text>
          <text transform="translate(45 39) rotate(-16)" font-size="5">FRONT</text>
          <text transform="translate(44 70) rotate(12)" font-size="5">BOTTOM</text>
        </g>
        <path d="m54 66 19 22" stroke="#35dc51" stroke-width="2"/>
        <path d="M49 82 72 89" stroke="#e0182c" stroke-width="2"/>
        <path d="M86 62 73 88" stroke="#1212d6" stroke-width="2"/>
        <g font-family="Liberation Sans" font-size="8"><text x="46" y="54" fill="#35dc51">Y</text><text x="42" y="82" font-size="7" fill="#e0182c">X</text><text x="90" y="54" fill="#1212d6">Z</text></g>
        <path d="m72 87 8-3 6 3v8l-7 4-7-4z" fill="#a2a2c0"/><path d="m72 87 7 2v10M79 89l7-2" fill="none" stroke="#7c7ca0"/>
        <path d="m90 89 9-1-4 5z" fill="#43436b"/>
      </svg>
      <svg class="absolute right-[10px] bottom-5 h-[28px] w-[30px]" viewBox="0 0 30 28" role="img" aria-label="Axis cross">
        <path d="M16 22 8 10" stroke="#128a2a" stroke-width="1.500"/><path d="M5 6 12 12 7 14z" fill="#128a2a"/>
        <path d="M16 22 22 14" stroke="#10107a" stroke-width="1.300"/><path d="m25 10-1 6-4-3z" fill="#10107a"/>
        <path d="M16 22H7" stroke="#7a1022" stroke-width="2"/>
        <g font-family="Liberation Sans" font-size="7" fill="#1b1b26"><text x="7" y="8">Y</text><text x="25" y="12">Z</text><text x="6" y="23">X</text></g>
      </svg>
    </div>
    <div role="tablist" class="flex h-5 border-t border-white bg-[#f0f0f0]">
      <button role="tab" class="flex h-[18px] w-[137px] items-center gap-[3px] border-r border-[#d9d9d9] bg-white pl-[9px] font-['DejaVu_Sans_Condensed','DejaVu_Sans',sans-serif] text-[8px] leading-3">
        <svg class="size-3"><use href="#logo"/></svg>pulley 180t 74mm 02 : 1*
        <svg class="size-[11px]" viewBox="0 0 11 11"><rect x=".5" y=".5" width="10" height="10" rx="1.500" fill="#e0603c" stroke="#b8401c"/><path d="m3 3 5 5M8 3 3 8" stroke="#fff" stroke-width="1.700"/></svg>
      </button>
    </div>
  </section>
</main>

<footer class="flex h-5 items-center font-['DejaVu_Sans_Condensed','DejaVu_Sans',sans-serif] text-[8px] leading-3">
  <p class="flex-1 pl-px">Preselected: pulley_180t_74mm_02.Gear.Revolution.Face3 (16.503220 mm, -44.049129 mm, -2.039860 mm)</p>
  <button class="flex h-full w-[61px] items-center justify-end gap-1 border-l border-[#d5d5d5] pr-[5px]">
    <svg class="h-[10px] w-2" viewBox="0 0 8 10"><rect x=".8" y=".6" width="6.400" height="8.800" rx="2.500" fill="none" stroke="#222"/><path d="M4 1v3" stroke="#222"/></svg>CAD<svg class="size-2"><use href="#dd"/></svg></button>
  <span class="flex h-full items-center border-x border-[#d5d5d5] px-[2px]">165,60 mm x 164,14 mm</span>
  <svg class="ml-1 size-[9px] self-end" viewBox="0 0 9 9"><path d="M7 1h1v1H7zM7 4h1v1H7zM4 4h1v1H4zM7 7h1v1H7zM4 7h1v1H4zM1 7h1v1H1z" fill="#a5a5a5"/></svg>
</footer>
</body>
</html>
